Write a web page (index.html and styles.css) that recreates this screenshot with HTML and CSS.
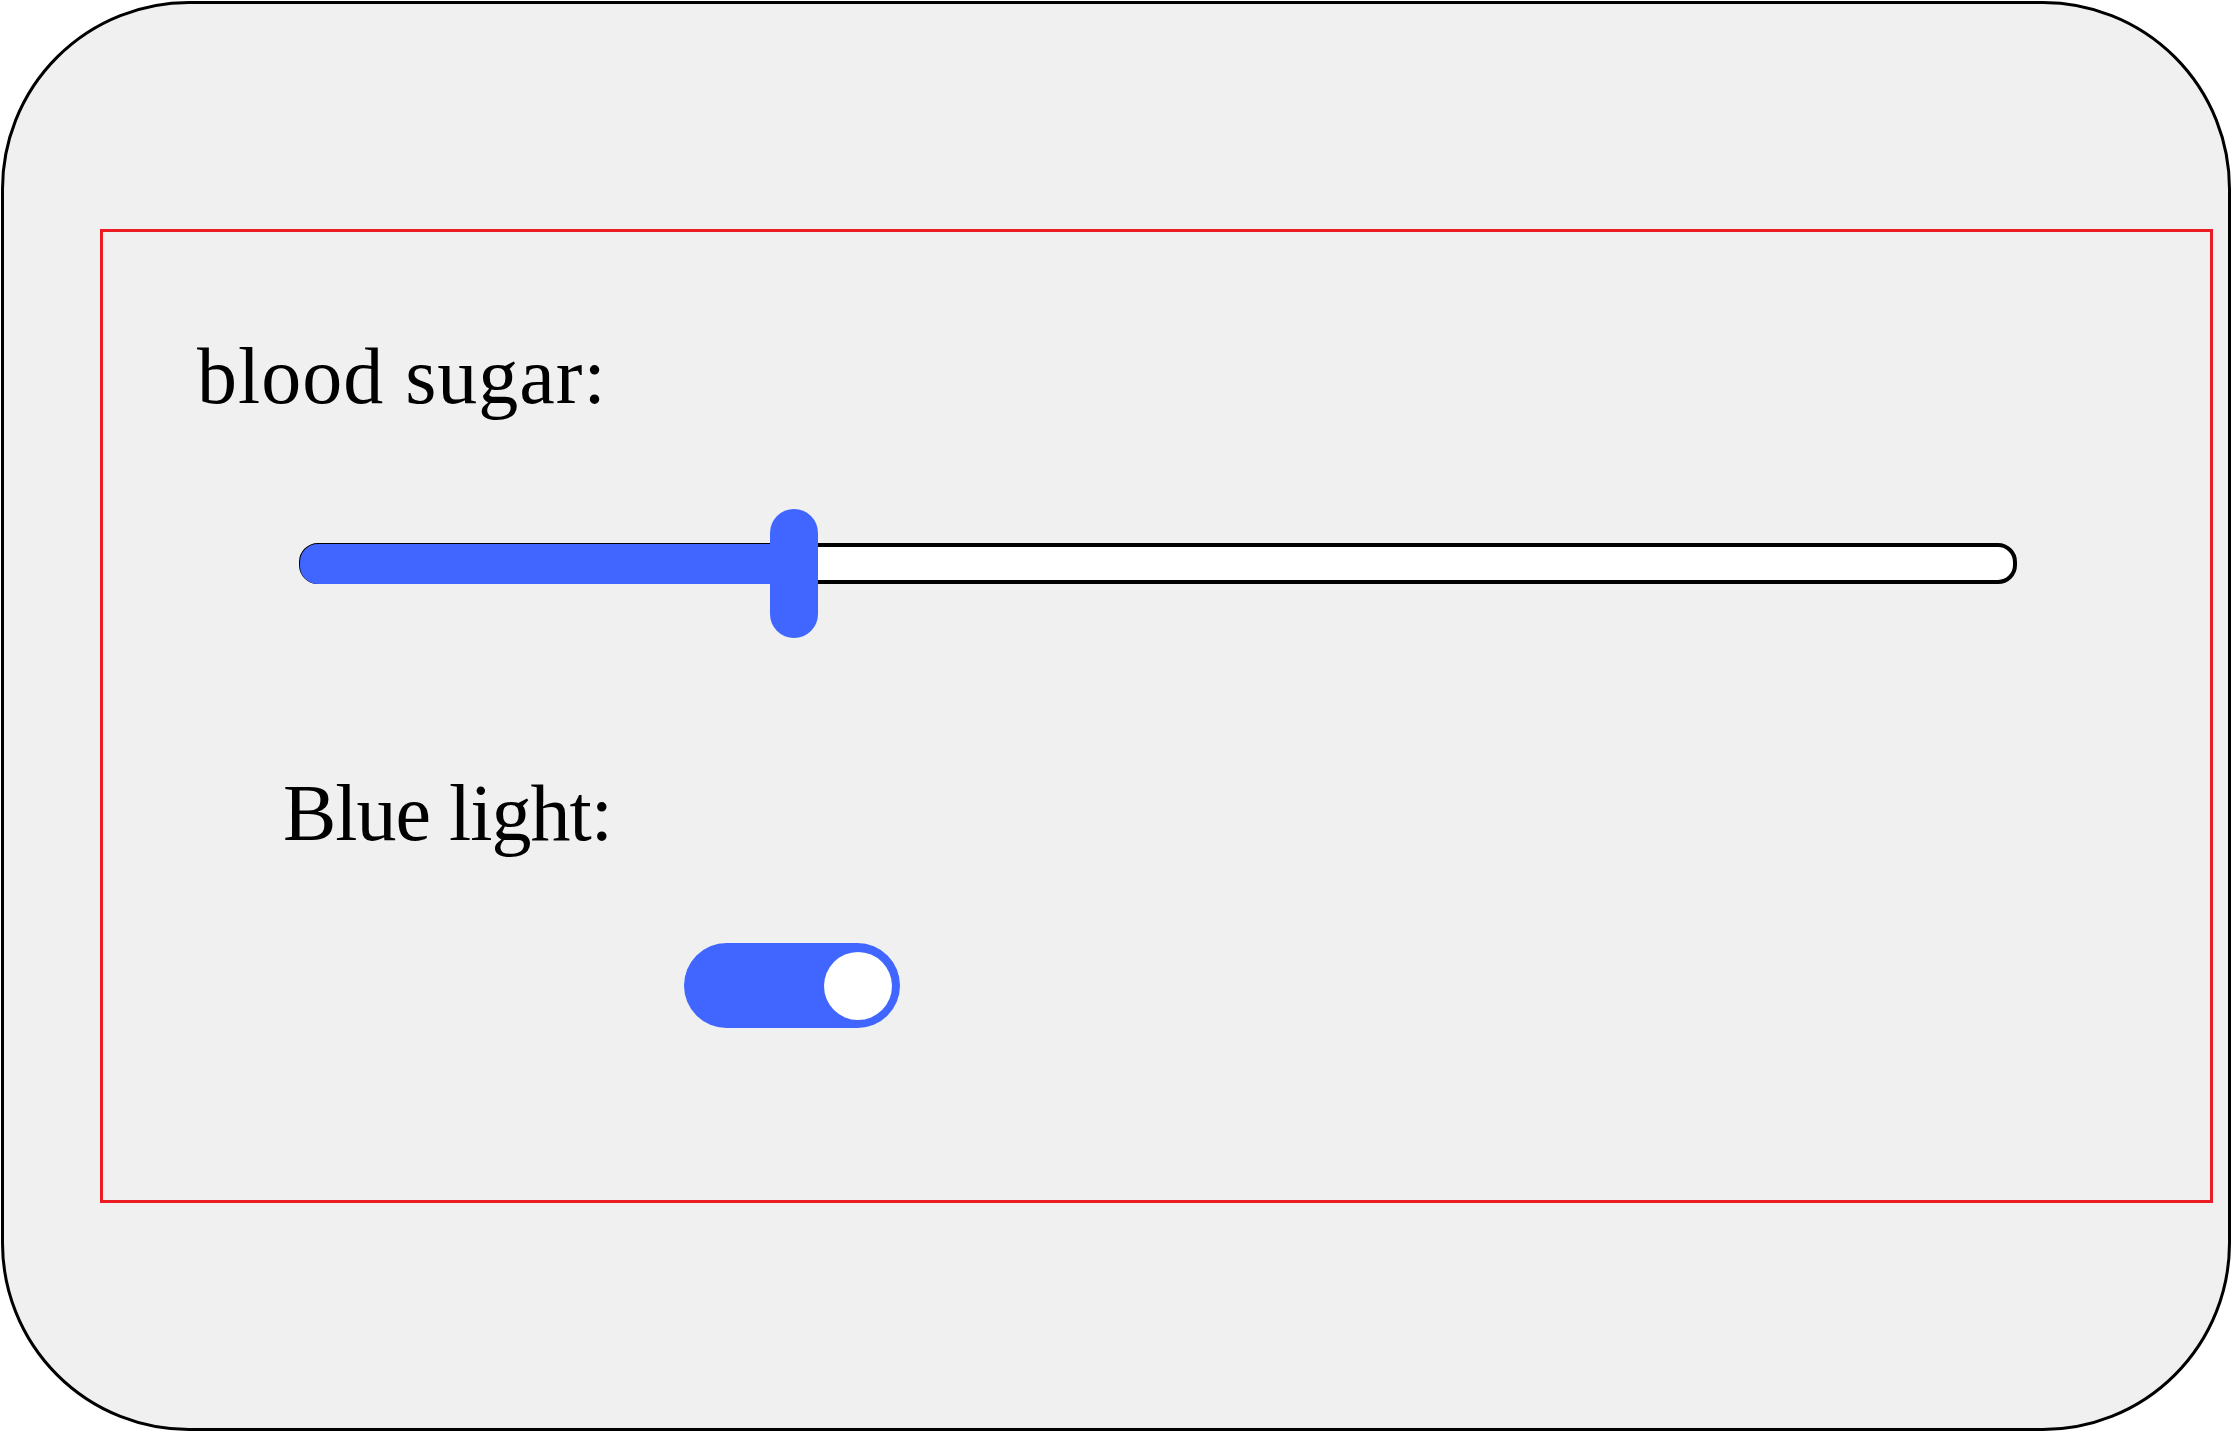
FILE: index.html
```html
<!DOCTYPE html>
<html>
<head>
<meta charset="utf-8">
<link rel="stylesheet" href="styles.css">
</head>
<body>
<div class="card">
  <div class="panel">
    <div class="label label-sugar">blood sugar:</div>
    <div class="slider">
      <div class="track">
        <div class="fill"></div>
      </div>
      <div class="thumb"></div>
    </div>
    <div class="label label-light">Blue light:</div>
    <div class="toggle"><div class="knob"></div></div>
  </div>
</div>
</body>
</html>
```
FILE: styles.css
```css
html, body {
  margin: 0;
  padding: 0;
  background: #ffffff;
}
.card {
  box-sizing: border-box;
  width: 2230px;
  height: 1430px;
  margin: 1px;
  border: 3px solid #000;
  border-radius: 188px;
  background: #f0f0f0;
  padding: 225px 0 0 96px;
}
.panel {
  box-sizing: border-box;
  width: 2113px;
  height: 974px;
  border: 3px solid #ec1c24;
  display: flex;
  flex-direction: column;
  align-items: flex-start;
}
.label {
  font-family: "Liberation Serif", "Times New Roman", serif;
  font-size: 80px;
  line-height: 80px;
  color: #000;
  white-space: nowrap;
}
.label-sugar {
  margin-top: 104px;
  margin-left: 94px;
  letter-spacing: 1px;
}
.slider {
  position: relative;
  margin-top: 93px;
  margin-left: 196px;
  width: 1718px;
  height: 129px;
}
.track {
  position: relative;
  box-sizing: border-box;
  margin-top: 34px;
  height: 41px;
  border: 4px solid #000;
  border-radius: 19px;
  background: #fff;
}
.fill {
  position: absolute;
  left: -3px;
  top: -3px;
  bottom: -4px;
  width: 496px;
  background: #4066ff;
  border-radius: 18px;
}
.thumb {
  position: absolute;
  left: 471px;
  top: 0;
  width: 48px;
  height: 129px;
  border-radius: 24px;
  background: #4066ff;
}
.label-light {
  margin-top: 135px;
  margin-left: 180px;
  letter-spacing: -1px;
}
.toggle {
  box-sizing: border-box;
  margin-top: 90px;
  margin-left: 581px;
  width: 216px;
  height: 85px;
  border-radius: 43px;
  background: #4066ff;
  display: flex;
  justify-content: flex-end;
  align-items: center;
  padding-right: 8px;
}
.knob {
  width: 68px;
  height: 68px;
  border-radius: 50%;
  background: #fff;
}
```
